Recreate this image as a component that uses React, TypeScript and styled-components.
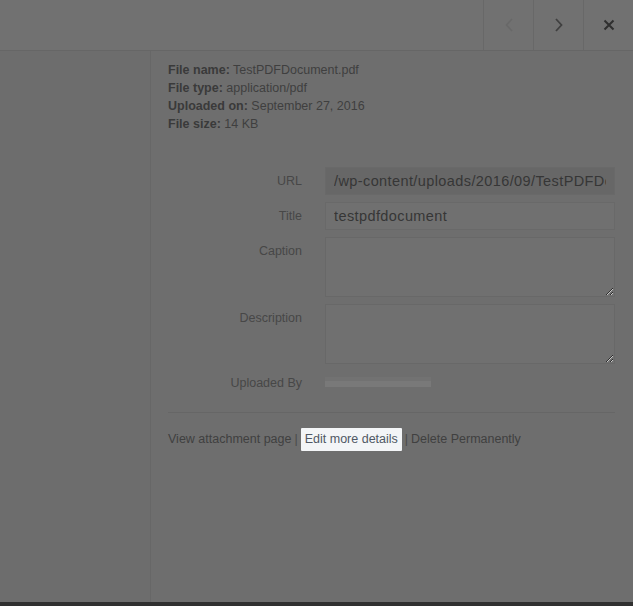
import { createGlobalStyle, styled } from "styled-components";

const GlobalStyle = createGlobalStyle`
    html, body {
        margin: 0;
        padding: 0;
        background-color: #6e6e6e;
    }

    * {
        box-sizing: border-box;
    }
`;

const meta = [
    { label: "File name:", value: "TestPDFDocument.pdf" },
    { label: "File type:", value: "application/pdf" },
    { label: "Uploaded on:", value: "September 27, 2016" },
    { label: "File size:", value: "14 KB" },
];

const App = () => {
    return (
        <>
            <GlobalStyle />
            <Frame>
                <Header>
                    <NavButton $muted>
                        <svg width="10" height="16" viewBox="0 0 10 16">
                            <path d="M8 2 L2.5 8 L8 14" fill="none" stroke="currentColor" strokeWidth="1.6" />
                        </svg>
                    </NavButton>
                    <NavButton>
                        <svg width="10" height="16" viewBox="0 0 10 16">
                            <path d="M2 2 L7.5 8 L2 14" fill="none" stroke="currentColor" strokeWidth="1.8" />
                        </svg>
                    </NavButton>
                    <NavButton $close>
                        <svg width="12" height="12" viewBox="0 0 12 12">
                            <path d="M1.5 1.5 L10.5 10.5 M10.5 1.5 L1.5 10.5" fill="none" stroke="currentColor" strokeWidth="2" />
                        </svg>
                    </NavButton>
                </Header>

                <Body>
                    <Sidebar />
                    <Details>
                        <Meta>
                            {meta.map((m) => (
                                <div key={m.label}>
                                    <strong>{m.label}</strong> {m.value}
                                </div>
                            ))}
                        </Meta>

                        <Form>
                            <Label>URL</Label>
                            <Field readOnly $readonly value="/wp-content/uploads/2016/09/TestPDFDocument.pdf" />

                            <Label>Title</Label>
                            <Field readOnly value="testpdfdocument" />

                            <Label>Caption</Label>
                            <Area readOnly value="" />

                            <Label>Description</Label>
                            <Area readOnly value="" />

                            <Label $short>Uploaded By</Label>
                            <Blur />
                        </Form>

                        <Actions>
                            <ActionLink>View attachment page</ActionLink>
                            <Pipe>|</Pipe>
                            <HighlightLink>Edit more details</HighlightLink>
                            <Pipe>|</Pipe>
                            <ActionLink>Delete Permanently</ActionLink>
                        </Actions>
                    </Details>
                </Body>

                <BottomStrip />
            </Frame>
        </>
    );
};

export default App;

const Frame = styled.div`
    display: flex;
    flex-direction: column;
    height: 606px;
    width: 633px;
    overflow: hidden;
    font-family: "Liberation Sans", Arial, sans-serif;
`;

const Header = styled.div`
    display: flex;
    justify-content: flex-end;
    height: 51px;
    background-color: #717171;
    border-bottom: 1px solid #666666;
`;

const NavButton = styled.div<{ $muted?: boolean; $close?: boolean }>`
    display: flex;
    align-items: center;
    justify-content: center;
    width: 50px;
    height: 100%;
    border-left: 1px solid #686868;
    color: ${(p) => (p.$muted ? "#686868" : p.$close ? "#2f2f2f" : "#404040")};
`;

const Body = styled.div`
    display: flex;
    flex: 1;
`;

const Sidebar = styled.div`
    width: 151px;
    background-color: #6d6d6d;
    border-right: 1px solid #676767;
`;

const Details = styled.div`
    flex: 1;
    padding: 10px 18px 0 17px;
    background-color: #6e6e6e;
`;

const Meta = styled.div`
    font-size: 12.5px;
    line-height: 18px;
    color: #3f3f3f;

    strong {
        font-weight: 700;
        color: #3a3a3a;
    }
`;

const Form = styled.div`
    display: grid;
    grid-template-columns: 134px 290px;
    column-gap: 23px;
    row-gap: 7px;
    margin-top: 34px;
    padding-bottom: 21px;
    border-bottom: 1px solid #666666;
`;

const Label = styled.div<{ $short?: boolean }>`
    text-align: right;
    font-size: 12.5px;
    line-height: 15px;
    padding-top: ${(p) => (p.$short ? "5px" : "7px")};
    color: #474747;
`;

const Field = styled.input<{ $readonly?: boolean }>`
    height: 28px;
    width: 100%;
    padding: 0 8px;
    font-family: "Liberation Sans", Arial, sans-serif;
    font-size: 14.5px;
    letter-spacing: 0.4px;
    color: #363636;
    background-color: ${(p) => (p.$readonly ? "#676767" : "#707070")};
    border: 1px solid #696969;
    border-radius: 0;
    outline: none;
`;

const Area = styled.textarea`
    display: block;
    height: 60px;
    width: 100%;
    padding: 6px 8px;
    font-family: "Liberation Sans", Arial, sans-serif;
    font-size: 14px;
    background-color: #707070;
    border: 1px solid #686868;
    border-radius: 0;
    outline: none;
    resize: vertical;
`;

const Blur = styled.div`
    align-self: start;
    margin-top: 6px;
    width: 106px;
    height: 10px;
    background: linear-gradient(to bottom, #727272 0 40%, #797979 40% 100%);
`;

const Actions = styled.div`
    display: flex;
    align-items: center;
    margin-top: 14px;
    font-size: 12.5px;
    color: #404040;
`;

const ActionLink = styled.span`
    line-height: 24px;
`;

const Pipe = styled.span`
    padding: 0 3px;
    color: #4a4a4a;
`;

const HighlightLink = styled.span`
    padding: 0 4px;
    line-height: 23px;
    background-color: #f3f5f7;
    color: #4f5864;
    border-radius: 1px;
`;

const BottomStrip = styled.div`
    height: 4px;
    background-color: #303030;
`;
